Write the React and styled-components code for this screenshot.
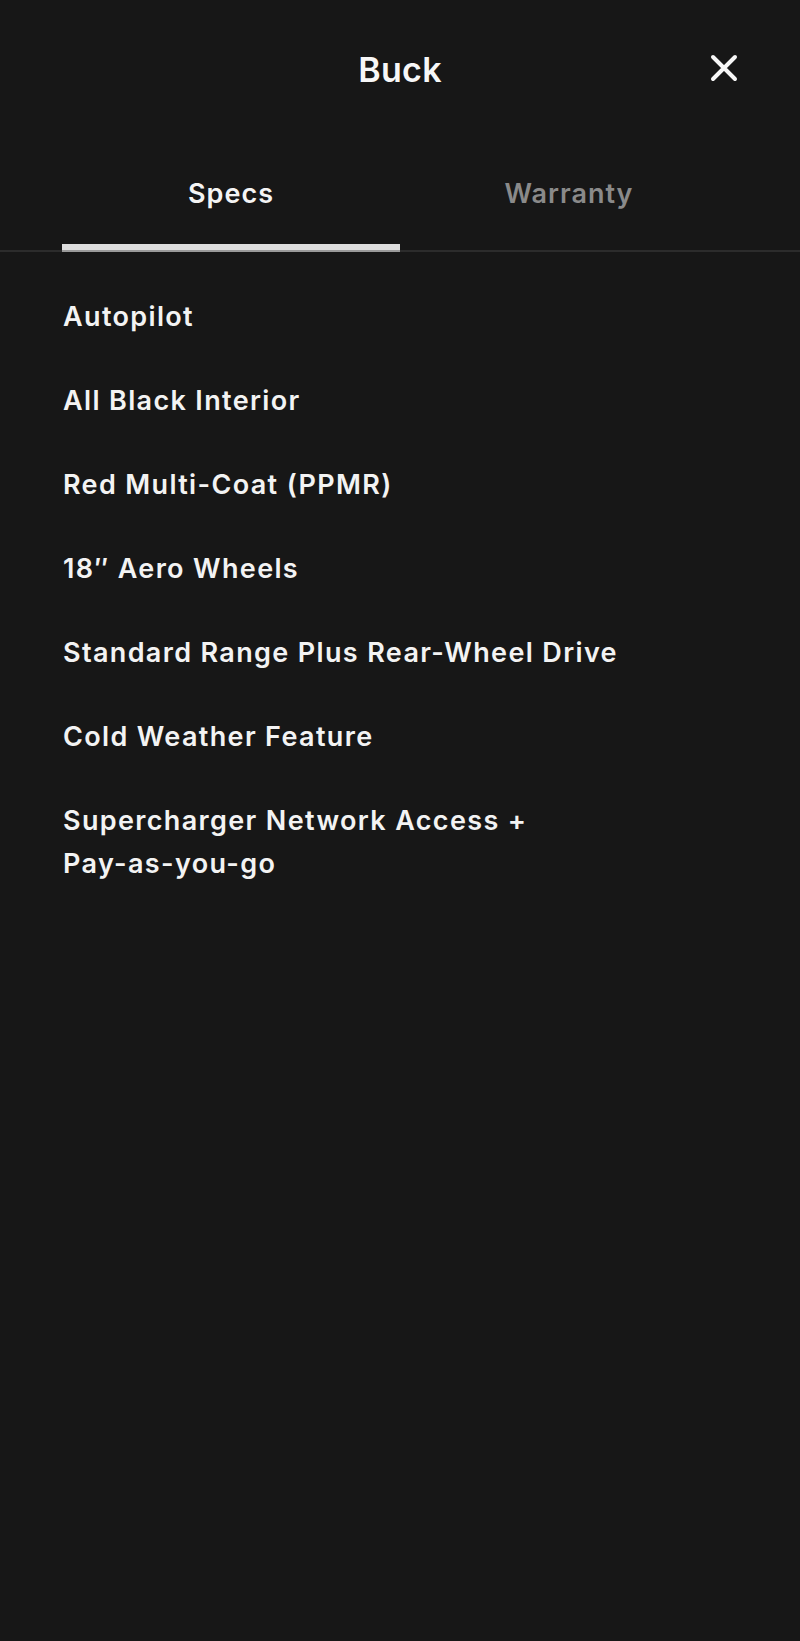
import React, { useState } from "react";
import styled, { createGlobalStyle } from "styled-components";

const Global = createGlobalStyle`
  html, body { margin: 0; padding: 0; background: #171717; }
  body { font-family: Inter, "Noto Sans", "Liberation Sans", sans-serif; color: #f2f2f2; }
  * { box-sizing: border-box; }
`;

const Page = styled.div`
  width: 800px;
  min-height: 1641px;
  background: #171717;
  display: flex;
  flex-direction: column;
`;

const Header = styled.header`
  height: 138px;
  display: grid;
  grid-template-columns: 1fr auto 1fr;
  align-items: center;
  padding: 0 63px;
`;

const Title = styled.h1`
  grid-column: 2;
  margin: 0;
  font-size: 34px;
  font-weight: 600;
  letter-spacing: 0.3px;
  color: #f7f7f7;
`;

const Close = styled.button`
  grid-column: 3;
  justify-self: end;
  background: none;
  border: 0;
  padding: 0;
  width: 28px;
  height: 28px;
  margin-top: -3px;
  margin-right: -1px;
  display: flex;
  align-items: center;
  justify-content: center;
  cursor: pointer;
`;

const Tabs = styled.nav`
  height: 114px;
  display: flex;
  padding: 0 62px 0 62px;
  border-bottom: 2px solid #2c2c2c;
`;

const Tab = styled.button`
  flex: 1;
  background: none;
  border: 0;
  padding: 0 0 42px;
  margin-bottom: -2px;
  font-family: inherit;
  font-size: 27px;
  font-weight: 600;
  letter-spacing: 1px;
  color: ${(p) => (p.$active ? "#f4f4f4" : "#8a8a8a")};
  display: flex;
  align-items: flex-end;
  justify-content: center;
  position: relative;
  cursor: pointer;
  &::after {
    content: "";
    position: absolute;
    left: 0;
    right: 0;
    bottom: 0;
    height: 6px;
    background: ${(p) => (p.$active ? "#dedede" : "transparent")};
    border-bottom: ${(p) => (p.$active ? "2px solid #9a9a9a" : "0")};
  }
`;

const List = styled.ul`
  list-style: none;
  margin: 0;
  padding: 43px 63px 0;
  display: flex;
  flex-direction: column;
  gap: 41px;
`;

const Item = styled.li`
  font-size: 27px;
  font-weight: 600;
  line-height: 43px;
  color: #f3f3f3;
  letter-spacing: 1.35px;
`;

const specs = [
  "Autopilot",
  "All Black Interior",
  "Red Multi-Coat (PPMR)",
  "18\u2033 Aero Wheels",
  "Standard Range Plus Rear-Wheel Drive",
  "Cold Weather Feature",
  ["Supercharger Network Access +", "Pay-as-you-go"],
];

export default function App() {
  const [tab, setTab] = useState("specs");
  return (
    <Page>
      <Global />
      <Header>
        <Title>Buck</Title>
        <Close aria-label="Close">
          <svg width="28" height="28" viewBox="0 0 28 28" fill="none">
            <path d="M3 3 L25 25 M25 3 L3 25" stroke="#f7f7f7" strokeWidth="4" strokeLinecap="round" />
          </svg>
        </Close>
      </Header>
      <Tabs>
        <Tab $active={tab === "specs"} onClick={() => setTab("specs")}>Specs</Tab>
        <Tab $active={tab === "warranty"} onClick={() => setTab("warranty")}>Warranty</Tab>
      </Tabs>
      <List>
        {specs.map((s, i) => (
          <Item key={i}>
            {Array.isArray(s) ? (
              <>
                {s[0]}
                <br />
                {s[1]}
              </>
            ) : (
              s
            )}
          </Item>
        ))}
      </List>
    </Page>
  );
}
